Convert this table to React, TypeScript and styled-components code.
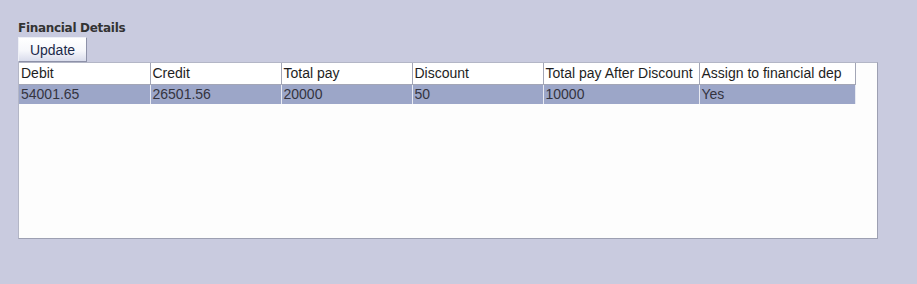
import React from "react";
import styled, { createGlobalStyle } from "styled-components";

const Global = createGlobalStyle`
  html, body { margin: 0; padding: 0; background: #c9cbdf; }
  body { font-family: "Liberation Sans", Arial, sans-serif; }
`;

const Page = styled.div`
  width: 917px;
  height: 284px;
  box-sizing: border-box;
  padding: 20px 0 0 18px;
  background: #c9cbdf;
`;

const Title = styled.div`
  font-family: "DejaVu Sans", Tahoma, sans-serif;
  font-weight: bold;
  font-size: 12px;
  color: #333333;
  line-height: 16px;
  height: 17px;
  letter-spacing: -0.3px;
`;

const Button = styled.button`
  display: block;
  width: 69px;
  height: 25px;
  box-sizing: border-box;
  padding: 0;
  font-family: "Liberation Sans", Arial, sans-serif;
  font-size: 14px;
  color: #1c2a4a;
  background: linear-gradient(#ffffff 0%, #f6f7fb 55%, #d9dcec 100%);
  border: 1px solid #eef0f7;
  border-right-color: #8d91a8;
  border-bottom-color: #8d91a8;
  border-radius: 0;
`;

const Panel = styled.div`
  width: 860px;
  height: 177px;
  box-sizing: border-box;
  background: #fdfdfd;
  border: 1px solid #b3b6c6;
  border-right-color: #9da0b2;
  border-bottom-color: #9da0b2;
`;

const Table = styled.table`
  border-collapse: collapse;
  table-layout: fixed;
  font-family: "Liberation Sans", Arial, sans-serif;
  font-size: 14px;
`;

const HeadCell = styled.th<{ w: number }>`
  width: ${(p) => p.w}px;
  height: 21px;
  padding: 0 0 0 2px;
  box-sizing: border-box;
  text-align: left;
  font-weight: normal;
  color: #1e1e1e;
  background: #ffffff;
  border-right: 1px solid #a3a6b6;
  border-bottom: 1px solid #a3a6b6;
  white-space: nowrap;
  overflow: hidden;
`;

const Row = styled.tr<{ selected?: boolean }>`
  background: ${(p) => (p.selected ? "#9ca6c8" : "transparent")};
`;

const Cell = styled.td`
  height: 20px;
  padding: 0 0 0 2px;
  box-sizing: border-box;
  color: #34343f;
  border-right: 1px solid #e8eaf2;
  white-space: nowrap;
  overflow: hidden;
`;

const columns = [
  { label: "Debit", w: 131 },
  { label: "Credit", w: 131 },
  { label: "Total pay", w: 131 },
  { label: "Discount", w: 131 },
  { label: "Total pay After Discount", w: 156 },
  { label: "Assign to financial dep", w: 156 },
];

const data = [["54001.65", "26501.56", "20000", "50", "10000", "Yes"]];

export default function App() {
  return (
    <Page>
      <Global />
      <Title>Financial Details</Title>
      <Button>Update</Button>
      <Panel>
        <Table>
          <thead>
            <tr>
              {columns.map((c) => (
                <HeadCell key={c.label} w={c.w}>
                  {c.label}
                </HeadCell>
              ))}
            </tr>
          </thead>
          <tbody>
            {data.map((r, i) => (
              <Row key={i} selected>
                {r.map((v, j) => (
                  <Cell key={j}>{v}</Cell>
                ))}
              </Row>
            ))}
          </tbody>
        </Table>
      </Panel>
    </Page>
  );
}
